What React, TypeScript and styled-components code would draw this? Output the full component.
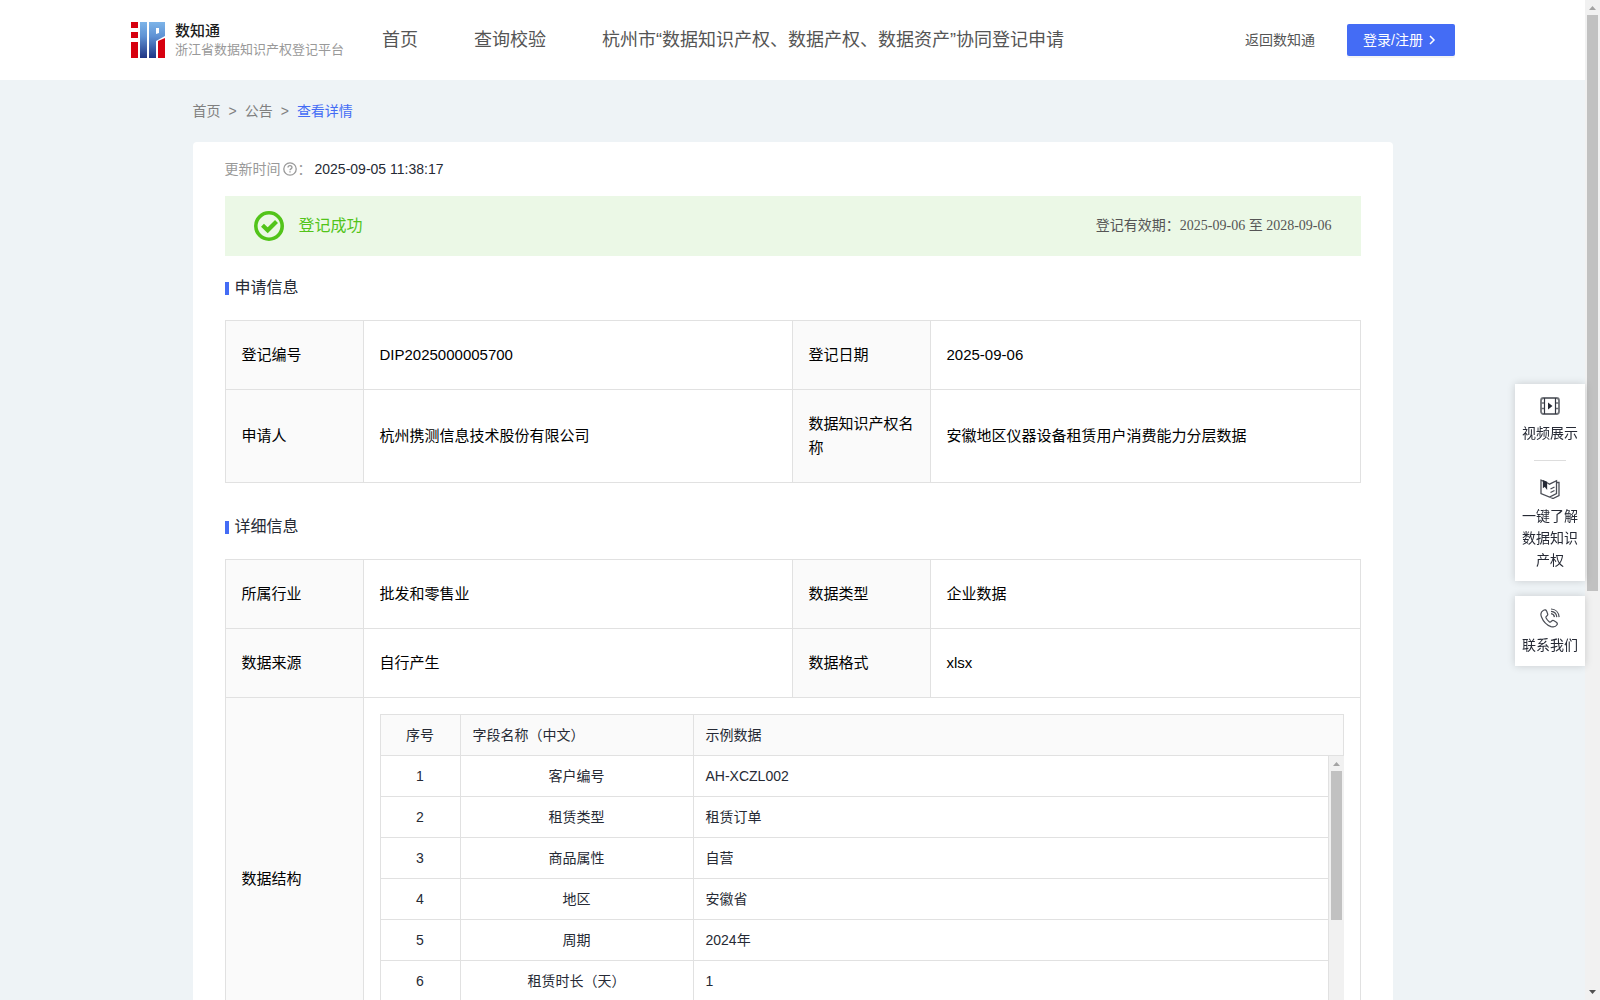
import React from 'react';
import styled, { createGlobalStyle } from 'styled-components';

const SANS = '"Liberation Sans", "Noto Sans CJK SC", sans-serif';
const SERIF = '"Liberation Serif", "Noto Sans CJK SC", serif';
const BLUE = '#446cf5';
const LINE = '#e1e1e1';
const GREEN = '#52c41a';

const Global = createGlobalStyle`
  *, *::before, *::after { box-sizing: border-box; }
  body { margin: 0; font-family: ${SANS}; font-size: 14px; line-height: 22px; color: #262a35; }
  a { color: inherit; text-decoration: none; }
  button { font: inherit; cursor: pointer; }
`;

const Shell = styled.div`
  display: flex;
  height: 100vh;
`;

const Pane = styled.div`
  flex: 1;
  min-width: 0;
  overflow: auto;
  scrollbar-width: none;
  background: #eef3f6;
`;

const Track = styled.div`
  flex: none;
  width: 15px;
  display: flex;
  flex-direction: column;
  align-items: center;
  background: #f1f1f1;
`;

const Rail = styled.div`
  flex: 1;
  width: 11px;
`;

const Thumb = styled.div<{ $size: string }>`
  height: ${(p) => p.$size};
  background: #c1c1c1;
`;

function ScrollTrack({ size }: { size: string }) {
  return (
    <Track aria-hidden="true">
      <svg width="15" height="15" viewBox="0 0 15 15"><path d="M4 10h7L7.500 6z" fill="#a3a3a3" /></svg>
      <Rail><Thumb $size={size} /></Rail>
      <svg width="15" height="15" viewBox="0 0 15 15"><path d="M4 5h7L7.500 9z" fill="#505050" /></svg>
    </Track>
  );
}

const Header = styled.header`
  display: flex;
  align-items: center;
  height: 80px;
  padding: 0 130px;
  background: #fff;
  color: #555;
`;

const Brand = styled.a`
  display: flex;
  align-items: center;
  gap: 9px;
  width: 224px;
`;

const BrandName = styled.strong`
  display: block;
  font-size: 15px;
  line-height: 20px;
  font-weight: 500;
  color: #1c1c1c;
`;

const BrandSub = styled.span`
  display: block;
  font-size: 13px;
  line-height: 18px;
  color: #999;
  white-space: nowrap;
`;

const Nav = styled.nav`
  display: flex;
  flex: 1;
  font-size: 18px;
  line-height: 28px;
`;

const NavLink = styled.a`
  padding: 0 28px;
  white-space: nowrap;
`;

const LoginButton = styled.button`
  display: flex;
  align-items: center;
  gap: 2px;
  height: 32px;
  margin-left: 32px;
  padding: 0 16px;
  border: 0;
  border-radius: 2px;
  background: ${BLUE};
  color: #fff;
  box-shadow: 0 2px 0 rgba(0, 0, 0, 0.045);
  white-space: nowrap;
`;

const Main = styled.main`
  max-width: 1200px;
  margin: 0 auto;
  padding-bottom: 40px;
`;

const Crumbs = styled.nav`
  display: flex;
  gap: 8px;
  padding: 20px 0;
  color: #808080;
`;

const CurrentCrumb = styled.a`
  color: ${BLUE};
`;

const Card = styled.article`
  padding: 16px 32px 40px;
  border-radius: 4px;
  background: #fff;
`;

const Updated = styled.div`
  display: flex;
  align-items: center;
  color: #999;
`;

const HelpMark = styled.span`
  display: flex;
  padding: 0 1px 0 2px;
`;

const UpdatedTime = styled.time`
  margin-left: 3px;
  color: #262a35;
`;

const Banner = styled.div`
  display: flex;
  align-items: center;
  gap: 15px;
  height: 60px;
  margin-top: 16px;
  padding: 0 29px;
  background: #ebf8e6;
`;

const BannerTitle = styled.span`
  flex: 1;
  font-size: 16px;
  line-height: 24px;
  color: ${GREEN};
`;

const Validity = styled.span`
  font-family: ${SERIF};
  color: #555;
`;

const SectionTitle = styled.h2`
  display: flex;
  align-items: center;
  gap: 6px;
  margin: 20px 0;
  font-size: 16px;
  line-height: 24px;
  font-weight: 400;

  &::before {
    content: '';
    width: 4px;
    height: 13px;
    background: ${BLUE};
  }
`;

const InfoTable = styled.table`
  width: 100%;
  table-layout: fixed;
  border-collapse: collapse;
  margin-bottom: 32px;
  font-size: 15px;
  line-height: 24px;
  color: #000;
`;

const LabelCol = styled.col`
  width: 138px;
`;

const ValueCol = styled.col`
  width: 429px;
`;

const Label = styled.th`
  padding: 22px 16px;
  border: 1px solid ${LINE};
  background: #fafafa;
  font-weight: 400;
  text-align: left;
`;

const Value = styled.td`
  padding: 22px 16px;
  border: 1px solid ${LINE};
`;

const NestedValue = styled(Value)`
  padding: 16px;
`;

const Fields = styled.table`
  width: 100%;
  table-layout: fixed;
  border-collapse: separate;
  border-spacing: 0;
  font-size: 14px;
  line-height: 22px;
  color: #262a35;

  th, td {
    padding: 9px 12px;
    border: solid ${LINE};
    border-width: 0 1px 1px 0;
  }

  th {
    border-top-width: 1px;
  }

  th:first-child, td:first-child {
    border-left-width: 1px;
  }
`;

const NumberCol = styled.col`
  width: 81px;
`;

const NameCol = styled.col`
  width: 233px;
`;

const FieldHead = styled.th<{ $center?: boolean }>`
  background: #fafafa;
  font-weight: 400;
  text-align: ${(p) => (p.$center ? 'center' : 'left')};
`;

const FieldCell = styled.td<{ $center?: boolean }>`
  text-align: ${(p) => (p.$center ? 'center' : 'left')};
`;

const FieldBody = styled.div`
  display: flex;
  height: 287px;
`;

const FieldScroll = styled.div`
  flex: 1;
  min-width: 0;
  overflow: auto;
  scrollbar-width: none;
`;

const Dock = styled.aside`
  position: fixed;
  top: 384px;
  right: 15px;
  display: grid;
  gap: 15px;
  width: 70px;
`;

const DockCard = styled.div`
  padding: 12px 7px 10px;
  background: #fff;
  box-shadow: 0 0 8px rgba(0, 0, 0, 0.16);
`;

const DockLink = styled.a`
  display: flex;
  flex-direction: column;
  align-items: center;
  gap: 6px;
  text-align: center;
`;

const DockRule = styled.hr`
  width: 32px;
  margin: 16px auto 18px;
  border: 0;
  border-top: 1px solid #ddd;
`;

const Logo = () => (
  <svg width="36" height="36" viewBox="0 0 36 36" aria-hidden="true">
    <defs>
      <linearGradient id="ip" x1="0" y1="0" x2="0" y2="1">
        <stop offset="0" stopColor="#7db4e8" />
        <stop offset="0.400" stopColor="#5f92d4" />
        <stop offset="1" stopColor="#1f3585" />
      </linearGradient>
    </defs>
    <path d="M1 0h7v6H1zM1 10h7v6H1zM1 20h7v16H1z" fill="#d7000f" />
    <path d="M10 0h7v36h-7zM19 0h16v14l-9 5v17h-7z" fill="url(#ip)" />
    <path d="M26 6h3v5l-3 1z" fill="#fff" />
    <path d="M28 19l7-3v20h-7z" fill="#d7000f" />
  </svg>
);

const HelpIcon = () => (
  <svg width="14" height="14" viewBox="0 0 14 14" fill="none" stroke="#999" strokeWidth="1.300" aria-hidden="true">
    <circle cx="7" cy="7" r="6.200" />
    <path d="M5 5.600c0-2.600 4-2.600 4 0 0 1.300-2 1.300-2 2.600M7 9.300v1.300" />
  </svg>
);

const CheckIcon = () => (
  <svg width="30" height="30" viewBox="0 0 30 30" fill="none" stroke={GREEN} aria-hidden="true">
    <circle cx="15" cy="15" r="13.200" strokeWidth="3.600" />
    <path d="M8.500 14.300l5.200 5 8.800-8.800" strokeWidth="4.200" />
  </svg>
);

const VideoIcon = () => (
  <svg width="20" height="20" viewBox="0 0 20 20" fill="none" aria-hidden="true">
    <rect x="1" y="2" width="18" height="16" rx="2.500" stroke="#6f7278" strokeWidth="1.800" />
    <path d="M1 7h3.500M1 12.500h3.500M15.500 7H19M15.500 12.500H19" stroke="#6f7278" strokeWidth="1.400" />
    <path d="M4.500 2v16M15.500 2v16" stroke="#333741" strokeWidth="1.200" />
    <path d="M8 6.500v7l4.500-3.500z" fill="#262a35" />
  </svg>
);

const BookIcon = () => (
  <svg width="20" height="20" viewBox="0 0 20 20" fill="none" stroke="#4a4d55" strokeWidth="1.300" aria-hidden="true">
    <path d="M1 1.200l7 3 1.500 1 7-3.500V14.500l-7 3.500L1 14.500zM16.500 3.500H19v13l-6 3-3.500-1.500" />
    <path d="M10.500 10l4-2M10.500 13.500l4-2" />
    <path d="M3.500 2v6l1.500-1 1.500 2V3.300z" fill="#262a35" stroke="#262a35" />
  </svg>
);

const PhoneIcon = () => (
  <svg width="20" height="20" viewBox="0 0 20 20" fill="none" stroke="#4a4d55" strokeWidth="1.200" aria-hidden="true">
    <path d="M3.500 2.200C1 3.500.3 6 1.500 9c1.800 4.600 5 8 9.500 9.600 2.600.8 4.800.2 6-1.800.8-1.300.4-2-1-2.900l-2-1.200c-1.200-.6-1.900-.2-2.700.7-.7.800-1.300.9-2.100.3-1.500-1-2.400-2.200-3.100-3.600-.4-.9-.1-1.400.7-2 1-.7 1.200-1.400.8-2.400L6.700 3.300c-.7-1.400-1.600-2-3.200-1.100z" />
    <path d="M11 5.700c2 .2 3.200 1.400 3.400 3.400M11 3.300c3.400.3 5.500 2.400 5.800 5.800M11 1c4.600.2 7.800 3.400 8.100 8.100" />
  </svg>
);

const FIELDS = [
  ['客户编号', 'AH-XCZL002'],
  ['租赁类型', '租赁订单'],
  ['商品属性', '自营'],
  ['地区', '安徽省'],
  ['周期', '2024年'],
  ['租赁时长（天）', '1'],
];

const InfoCols = () => (
  <colgroup><LabelCol /><ValueCol /><LabelCol /><col /></colgroup>
);

const FieldCols = () => (
  <colgroup><NumberCol /><NameCol /><col /></colgroup>
);

function InfoRow({ cells }: { cells: [string, string, string, string] }) {
  return (
    <tr>
      <Label scope="row">{cells[0]}</Label>
      <Value>{cells[1]}</Value>
      <Label scope="row">{cells[2]}</Label>
      <Value>{cells[3]}</Value>
    </tr>
  );
}

export default function App() {
  return (
    <>
      <Global />
      <Shell>
        <Pane>
          <Header>
            <Brand href="#">
              <Logo />
              <span>
                <BrandName>数知通</BrandName>
                <BrandSub>浙江省数据知识产权登记平台</BrandSub>
              </span>
            </Brand>
            <Nav>
              <NavLink href="#">首页</NavLink>
              <NavLink href="#">查询校验</NavLink>
              <NavLink href="#">杭州市“数据知识产权、数据产权、数据资产”协同登记申请</NavLink>
            </Nav>
            <a href="#">返回数知通</a>
            <LoginButton type="button">
              登录/注册
              <svg width="14" height="14" viewBox="0 0 14 14" fill="none" stroke="#fff" strokeWidth="1.500" aria-hidden="true">
                <path d="M5 3l4 4-4 4" />
              </svg>
            </LoginButton>
          </Header>
          <Main>
            <Crumbs>
              <a href="#">首页</a>
              <span>&gt;</span>
              <a href="#">公告</a>
              <span>&gt;</span>
              <CurrentCrumb href="#">查看详情</CurrentCrumb>
            </Crumbs>
            <Card>
              <Updated>
                更新时间<HelpMark><HelpIcon /></HelpMark>：<UpdatedTime>2025-09-05 11:38:17</UpdatedTime>
              </Updated>
              <Banner>
                <CheckIcon />
                <BannerTitle>登记成功</BannerTitle>
                <Validity>登记有效期：2025-09-06 至 2028-09-06</Validity>
              </Banner>

              <SectionTitle>申请信息</SectionTitle>
              <InfoTable>
                <InfoCols />
                <tbody>
                  <InfoRow cells={['登记编号', 'DIP2025000005700', '登记日期', '2025-09-06']} />
                  <InfoRow cells={['申请人', '杭州携测信息技术股份有限公司', '数据知识产权名称', '安徽地区仪器设备租赁用户消费能力分层数据']} />
                </tbody>
              </InfoTable>

              <SectionTitle>详细信息</SectionTitle>
              <InfoTable>
                <InfoCols />
                <tbody>
                  <InfoRow cells={['所属行业', '批发和零售业', '数据类型', '企业数据']} />
                  <InfoRow cells={['数据来源', '自行产生', '数据格式', 'xlsx']} />
                  <tr>
                    <Label scope="row">数据结构</Label>
                    <NestedValue colSpan={3}>
                      <Fields>
                        <FieldCols />
                        <thead>
                          <tr>
                            <FieldHead $center>序号</FieldHead>
                            <FieldHead>字段名称（中文）</FieldHead>
                            <FieldHead>示例数据</FieldHead>
                          </tr>
                        </thead>
                      </Fields>
                      <FieldBody>
                        <FieldScroll>
                          <Fields>
                            <FieldCols />
                            <tbody>
                              {FIELDS.map(([name, sample], i) => (
                                <tr key={name}>
                                  <FieldCell $center>{i + 1}</FieldCell>
                                  <FieldCell $center>{name}</FieldCell>
                                  <FieldCell>{sample}</FieldCell>
                                </tr>
                              ))}
                            </tbody>
                          </Fields>
                        </FieldScroll>
                        <ScrollTrack size="58%" />
                      </FieldBody>
                    </NestedValue>
                  </tr>
                </tbody>
              </InfoTable>
            </Card>
          </Main>
          <Dock>
            <DockCard>
              <DockLink href="#"><VideoIcon />视频展示</DockLink>
              <DockRule />
              <DockLink href="#"><BookIcon />一键了解数据知识产权</DockLink>
            </DockCard>
            <DockCard>
              <DockLink href="#"><PhoneIcon />联系我们</DockLink>
            </DockCard>
          </Dock>
        </Pane>
        <ScrollTrack size="59.4%" />
      </Shell>
    </>
  );
}
